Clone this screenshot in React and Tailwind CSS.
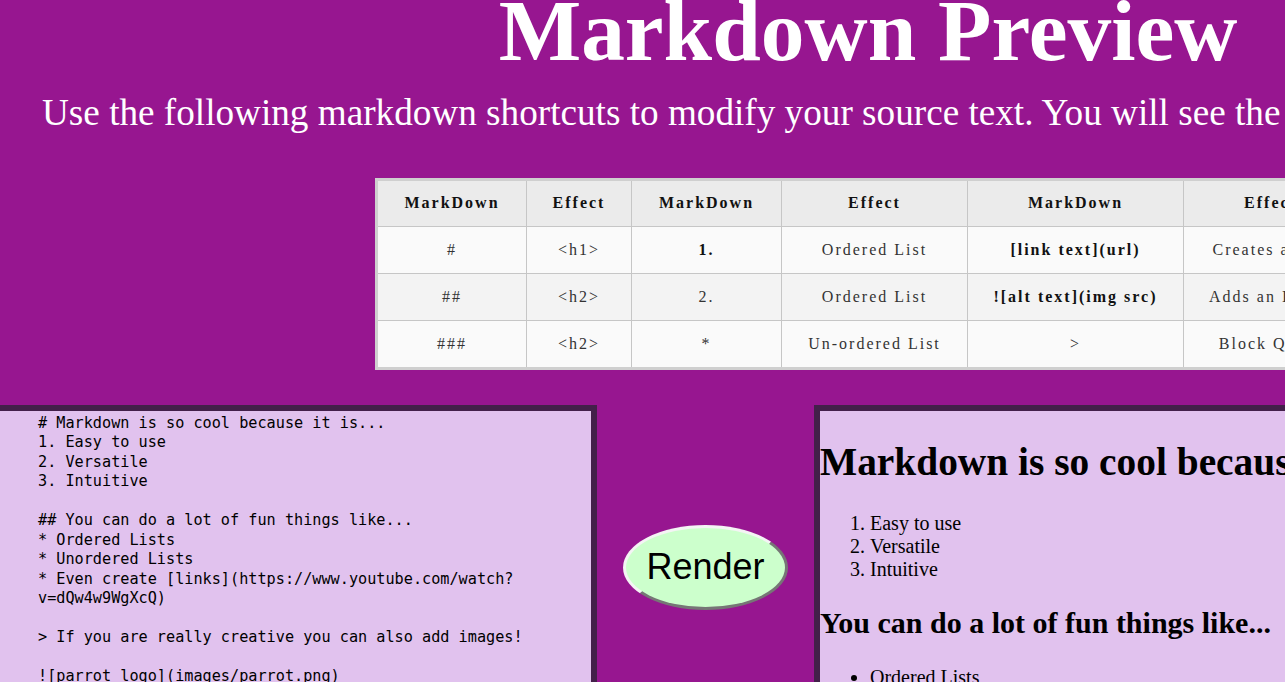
const rows = [
    [{t: '#'}, {t: '<h1>'}, {t: '1.', b: true}, {t: 'Ordered List'}, {t: '[link text](url)', b: true}, {t: 'Creates a link'}],
    [{t: '##'}, {t: '<h2>'}, {t: '2.'}, {t: 'Ordered List'}, {t: '![alt text](img src)', b: true}, {t: 'Adds an Image'}],
    [{t: '###'}, {t: '<h2>'}, {t: '*'}, {t: 'Un-ordered List'}, {t: '>'}, {t: 'Block Quote'}],
];

const headings = ['MarkDown', 'Effect', 'MarkDown', 'Effect', 'MarkDown', 'Effect'];
const colWidths = ['w-[149px]', 'w-[105px]', 'w-[150px]', 'w-[186px]', 'w-[216px]', 'w-[174px]'];

const source = `# Markdown is so cool because it is...
1. Easy to use
2. Versatile
3. Intuitive

## You can do a lot of fun things like...
* Ordered Lists
* Unordered Lists
* Even create [links](https://www.youtube.com/watch?v=dQw4w9WgXcQ)

> If you are really creative you can also add images!

![parrot logo](images/parrot.png)`;

const serif = "font-['Liberation_Serif','Times_New_Roman',serif]";

export default function App() {
    return (
        <div className="h-[682px] w-full overflow-hidden bg-[#971690]">
            <div className={`w-[1736px] ${serif}`}>
                <h1 className="-mt-[13px] text-center text-[87.4px] font-bold leading-none text-white">
                    Markdown Preview
                </h1>
                <p className="mt-[20px] whitespace-nowrap pl-[42px] text-[37.2px] leading-none text-white">
                    Use the following markdown shortcuts to modify your source text. You will see the changes in the preview below.
                </p>

                <div className="mt-[46px] flex justify-center">
                    <table className="table-fixed border-separate border-spacing-0 border-[3px] border-[#cfcfcf] text-[16px] tracking-[2px]">
                        <colgroup>
                            {colWidths.map((w, i) => <col key={i} className={w}/>)}
                        </colgroup>
                        <thead>
                        <tr className="bg-[#ebebeb]">
                            {headings.map((h, i) => (
                                <th key={i} className="h-[46px] border-r border-b border-[#c6c6c6] text-center font-bold text-[#111]">{h}</th>
                            ))}
                        </tr>
                        </thead>
                        <tbody>
                        {rows.map((row, r) => (
                            <tr key={r} className={r % 2 === 1 ? 'bg-[#f3f3f3]' : 'bg-[#fafafa]'}>
                                {row.map((c, i) => (
                                    <td key={i}
                                        className={`whitespace-nowrap border-r border-[#c6c6c6] text-center ${r < 2 ? 'h-[47px] border-b' : 'h-[46px]'} ${c.b ? 'font-bold text-[#111]' : 'text-[#333]'}`}>
                                        {c.t}
                                    </td>
                                ))}
                            </tr>
                        ))}
                        </tbody>
                    </table>
                </div>

                <div className="mt-[35px] flex items-start">
                    {/* source editor */}
                    <div className="h-[420px] w-[597px] border-[6px] border-l-0 border-[#43204a] bg-[#e1c2ee] pl-[38px] pr-[60px] pt-[3px]">
                        <div className="whitespace-pre-wrap break-words font-['DejaVu_Sans_Mono',monospace] text-[15.2px] leading-[19.5px] text-black">
                            {source}
                        </div>
                    </div>

                    <div className="flex w-[217px] justify-center pt-[120px]">
                        <button
                            className="flex h-[85px] w-[165px] items-center justify-center rounded-[50%] border-[3px] border-t-[#f4f4f4] border-l-[#f4f4f4] border-r-[#767676] border-b-[#767676] bg-[#ccffcc] font-['Liberation_Sans',Arial,sans-serif] text-[36px] text-black">
                            Render
                        </button>
                    </div>

                    {/* preview */}
                    <div className="h-[420px] w-[600px] border-[6px] border-[#43204a] bg-[#e1c2ee] text-black">
                        <h1 className="mt-[32px] whitespace-nowrap text-[39.4px] font-bold leading-none">
                            Markdown is so cool because it is...
                        </h1>
                        <ol className="mt-[30px] list-decimal pl-[50px] text-[20px] leading-[23px]">
                            <li>Easy to use</li>
                            <li>Versatile</li>
                            <li>Intuitive</li>
                        </ol>
                        <h2 className="mt-[27px] whitespace-nowrap text-[30px] font-bold leading-none">
                            You can do a lot of fun things like...
                        </h2>
                        <ul className="mt-[28px] list-disc pl-[50px] text-[20px] leading-[23px]">
                            <li>Ordered Lists</li>
                            <li>Unordered Lists</li>
                            <li>Even create <a className="text-[#0000ee] underline" href="#">links</a></li>
                        </ul>
                    </div>
                </div>
            </div>
        </div>
    );
}
